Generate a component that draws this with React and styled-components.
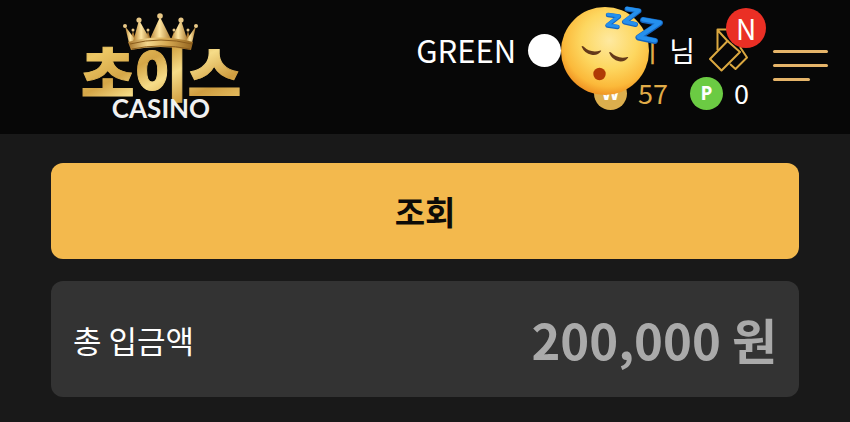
import React from "react"
import styled, { createGlobalStyle } from "styled-components"

const GlobalStyle = createGlobalStyle`
  * {
    box-sizing: border-box;
  }

  body {
    margin: 0;
    background-color: #191919;
    color: #fff;
    font-family: "Noto Sans CJK KR", sans-serif;
  }
`

const Header = styled.header`
  display: flex;
  align-items: center;
  gap: 24px;
  padding: 6px 22px 6px 76px;
  background-color: #070707;
`

const LogoLink = styled.a`
  display: flex;
  margin-right: auto;
`

const Account = styled.div`
  display: flex;
  flex-direction: column;
  gap: 2px;
  padding-top: 6px;
`

const UserRow = styled.div`
  display: flex;
  align-items: center;
  height: 44px;
  line-height: 44px;
`

const Level = styled.span`
  margin-right: 12px;
  font-size: 31px;
`

const Dot = styled.span`
  width: 33px;
  height: 33px;
  border-radius: 50%;
  background-color: #fff;
`

const Name = styled.span`
  position: relative;
  width: 96px;
  color: #e0ab48;
  font-size: 28px;
  text-align: right;
`

const Sticker = styled.svg`
  position: absolute;
  top: -28px;
  left: 0;
`

const Suffix = styled.span`
  margin-left: 12px;
  font-size: 28px;
`

const CouponButton = styled.button`
  position: relative;
  display: flex;
  margin-left: 14px;
  padding: 0;
  border: 0;
  background: none;
  cursor: pointer;
`

const NewBadge = styled.span`
  position: absolute;
  top: -20px;
  right: -17px;
  width: 40px;
  height: 40px;
  border-radius: 50%;
  background-color: #ea2f25;
  color: #fff;
  font-family: "Noto Sans CJK KR", sans-serif;
  font-size: 28px;
  line-height: 40px;
  text-align: center;
`

const BalanceRow = styled.div`
  display: flex;
  align-items: center;
  justify-content: flex-end;
  gap: 22px;
`

const Balance = styled.span`
  display: flex;
  align-items: center;
  gap: 11px;
  color: ${({ $tone }) => $tone};
  font-size: 27px;
  line-height: 38px;
`

const Coin = styled.span`
  width: 33px;
  height: 33px;
  border-radius: 50%;
  background-color: ${({ $tone }) => $tone};
  color: #fff;
  font-family: "Open Sans", sans-serif;
  font-size: 19px;
  font-weight: 700;
  line-height: 33px;
  text-align: center;
`

const MenuButton = styled.button`
  display: flex;
  flex-direction: column;
  gap: 11px;
  width: 55px;
  margin-bottom: 4px;
  padding: 0;
  border: 0;
  background: none;
  cursor: pointer;
`

const MenuLine = styled.span`
  width: ${({ $short }) => ($short ? "37px" : "55px")};
  height: 3px;
  border-radius: 2px;
  background-color: #e5b469;
`

const Main = styled.main`
  display: flex;
  flex-direction: column;
  gap: 22px;
  padding: 29px 6% 24px;
`

const SearchButton = styled.button`
  padding: 24px;
  border: 0;
  border-radius: 12px;
  background-color: #f3b94d;
  color: #0d0b08;
  font-family: inherit;
  font-size: 33px;
  font-weight: 700;
  line-height: 48px;
  cursor: pointer;
`

const TotalCard = styled.section`
  display: flex;
  align-items: center;
  justify-content: space-between;
  padding: 22px;
  border-radius: 12px;
  background-color: #333;
`

const TotalLabel = styled.span`
  font-size: 31px;
`

const TotalAmount = styled.strong`
  color: #aaa;
  font-size: 49px;
  font-weight: 700;
  line-height: 72px;
`

const Logo = () => (
  <svg width="170" height="122" viewBox="0 0 170 122">
    <defs>
      <linearGradient id="gold" x1="0" y1="0" x2="1" y2="1">
        <stop offset="0" stopColor="#c9973a" />
        <stop offset="0.2" stopColor="#edc865" />
        <stop offset="0.4" stopColor="#d5a647" />
        <stop offset="0.55" stopColor="#f6dc88" />
        <stop offset="0.75" stopColor="#cf9d40" />
        <stop offset="1" stopColor="#f0cf72" />
      </linearGradient>
      <linearGradient id="spike" x1="0" y1="0" x2="1" y2="0">
        <stop offset="0" stopColor="#b07a2a" />
        <stop offset="0.45" stopColor="#ffe6a2" />
        <stop offset="1" stopColor="#a8752a" />
      </linearGradient>
      <linearGradient id="band" x1="0" y1="0" x2="1" y2="0">
        <stop offset="0" stopColor="#a8752a" />
        <stop offset="0.3" stopColor="#f3d68c" />
        <stop offset="0.6" stopColor="#d8aa52" />
        <stop offset="1" stopColor="#93641f" />
      </linearGradient>
    </defs>
    <text
      x="85"
      y="90"
      textAnchor="middle"
      fontFamily="Noto Sans CJK KR"
      fontSize="58"
      fontWeight="900"
      fill="url(#gold)"
      stroke="url(#gold)"
      strokeWidth="1"
    >
      초이스
    </text>
    <g fill="#a87730">
      <path d="m53 38 4-13 4 13Z" />
      <path d="m68 38 4-13 4 13Z" />
      <path d="m94 38 4-13 4 13Z" />
      <path d="m108 38 4-13 4 13Z" />
    </g>
    <g fill="url(#spike)">
      <path d="M53 37 49 20l12 16Z" />
      <path d="m57 36 6-22 12 21Z" />
      <path d="m73 35 11-24 12 24Z" />
      <path d="m94 35 11-21 7 22Z" />
      <path d="m109 36 11-16-4 17Z" />
    </g>
    <path d="M52 36q32-9 65 0l-2 8q-31-6-60 0Z" fill="url(#band)" />
    <path d="M54 38q31-8 62 0M56 43q29-6 58 0" fill="none" stroke="#8a5c1c" />
    <g fill="#e8c887">
      <circle cx="49" cy="20" r="2" />
      <circle cx="57" cy="24" r="1.5" />
      <circle cx="63" cy="14" r="2.6" />
      <circle cx="72" cy="24" r="1.5" />
      <circle cx="84" cy="10" r="2.8" />
      <circle cx="98" cy="24" r="1.5" />
      <circle cx="105" cy="14" r="2.6" />
      <circle cx="112" cy="24" r="1.5" />
      <circle cx="120" cy="20" r="2" />
    </g>
    <text x="85" y="112" textAnchor="middle" fontFamily="Lato" fontSize="26" fontWeight="700" fill="#f1f1f1">
      CASINO
    </text>
  </svg>
)

const SleepingFace = () => (
  <Sticker width="106" height="98" viewBox="0 0 106 98" aria-hidden="true">
    <defs>
      <radialGradient id="face" cx="0.55" cy="0.38" r="0.64">
        <stop offset="0" stopColor="#fee9a0" />
        <stop offset="0.5" stopColor="#fdd760" />
        <stop offset="0.82" stopColor="#fbb93a" />
        <stop offset="1" stopColor="#ee8f20" />
      </radialGradient>
    </defs>
    <circle cx="44" cy="51" r="44" fill="url(#face)" />
    <g fill="#64391a">
      <path d="M20.500 46.500q1-1 2 0 7 7 17 4 1-.3.500.800-3 4.500-9.500 3.500-7-1.300-10-8.300Z" />
      <path d="M48 52.500q1-1 2 0 7 7 16.500 4.500 1.200-.2.500.800-3 4.300-9 3.500-7-1.300-10-8.800Z" />
    </g>
    <circle cx="38.500" cy="74" r="6.200" fill="#b03a05" />
    <g fill="none" strokeLinecap="round" strokeLinejoin="round">
      <g stroke="#1565c0">
        <path d="m47 15 11 1.500L46.500 25.500l10 1.500" strokeWidth="4.500" />
        <path d="m66 9 12 2L63.500 22l11 2.500" strokeWidth="5" />
        <path d="m82 20 17 3-21.500 14.500L94 41" strokeWidth="6" />
      </g>
      <g stroke="#2490ee">
        <path d="m47 14.500 11 1.500L46.500 25l10 1.500" strokeWidth="3" />
        <path d="m66 8.500 12 2L63.500 21.500l11 2.500" strokeWidth="3.500" />
        <path d="m82 19.500 17 3-21.500 14.500 16.500 3.500" strokeWidth="4" />
      </g>
    </g>
  </Sticker>
)

const CouponIcon = () => (
  <svg
    width="40"
    height="44"
    viewBox="0 0 40 44"
    fill="none"
    stroke="#dba840"
    strokeWidth="2"
    strokeLinejoin="round"
  >
    <path d="M8.500 22V1.500H24M8.500 2 19 13.500" />
    <path d="M18.500 13 1 31l11.500 11.500L31 24Z" />
    <path d="m31 19 7 10.500-11.500 11.500-5.500-5" />
  </svg>
)

export default function App() {
  return (
    <>
      <GlobalStyle />
      <Header>
        <LogoLink href="#" aria-label="초이스 CASINO">
          <Logo />
        </LogoLink>
        <Account>
          <UserRow>
            <Level>GREEN</Level>
            <Dot />
            <Name>
              이
              <SleepingFace />
            </Name>
            <Suffix>님</Suffix>
            <CouponButton aria-label="쿠폰">
              <CouponIcon />
              <NewBadge>N</NewBadge>
            </CouponButton>
          </UserRow>
          <BalanceRow>
            <Balance $tone="#e0ab48">
              <Coin $tone="#dcae4d">W</Coin>
              57
            </Balance>
            <Balance $tone="#fff">
              <Coin $tone="#6bcb43">P</Coin>0
            </Balance>
          </BalanceRow>
        </Account>
        <MenuButton aria-label="메뉴">
          <MenuLine />
          <MenuLine />
          <MenuLine $short />
        </MenuButton>
      </Header>
      <Main>
        <SearchButton>조회</SearchButton>
        <TotalCard>
          <TotalLabel>총 입금액</TotalLabel>
          <TotalAmount>200,000 원</TotalAmount>
        </TotalCard>
      </Main>
    </>
  )
}
